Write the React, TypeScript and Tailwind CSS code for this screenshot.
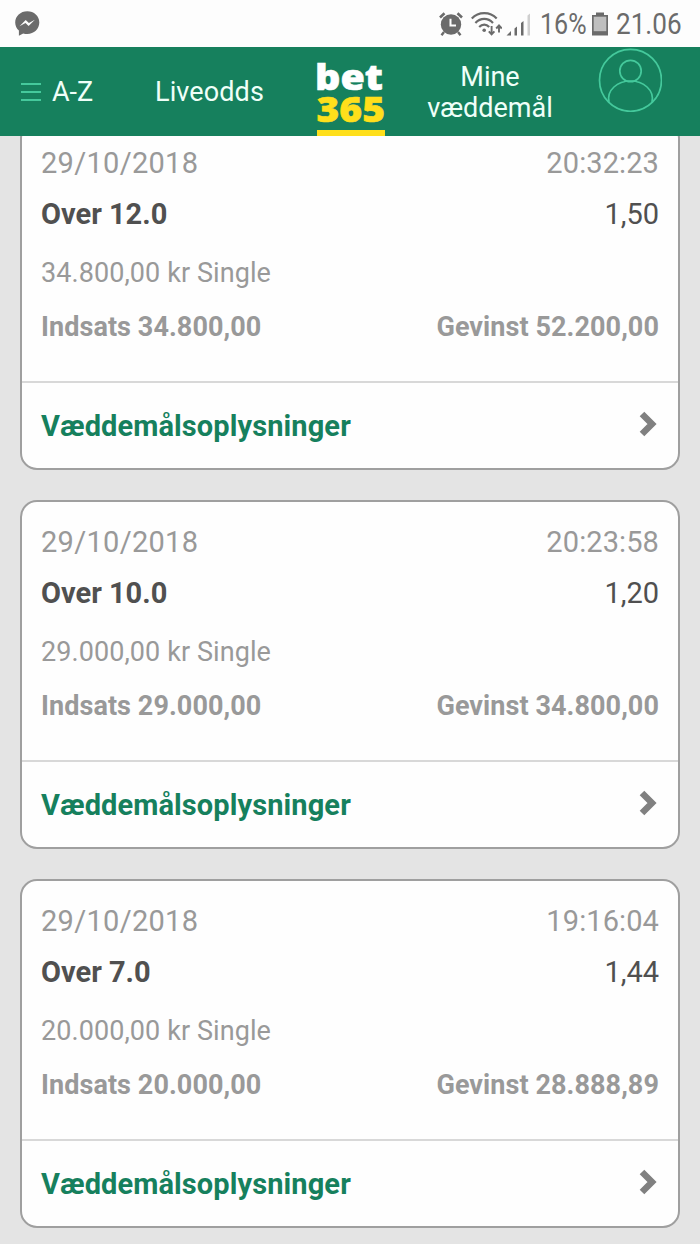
interface Bet {
    date: string;
    time: string;
    pick: string;
    odds: string;
    stake: string;
    payout: string;
}

const bets: Bet[] = [
    {
        date: "29/10/2018",
        time: "20:32:23",
        pick: "Over 12.0",
        odds: "1,50",
        stake: "34.800,00",
        payout: "52.200,00",
    },
    {
        date: "29/10/2018",
        time: "20:23:58",
        pick: "Over 10.0",
        odds: "1,20",
        stake: "29.000,00",
        payout: "34.800,00",
    },
    {
        date: "29/10/2018",
        time: "19:16:04",
        pick: "Over 7.0",
        odds: "1,44",
        stake: "20.000,00",
        payout: "28.888,89",
    },
];

const StatusBar = () => {
    return (
        <div className="flex h-[47px] shrink-0 items-center justify-between bg-[#fdfdfd] pl-[15px] pr-[18px] text-[#6b6b6b]">
            <svg width="25" height="26" viewBox="0 0 25 26">
                <path
                    d="M12.3 .3C5.5 .3 .2 5.2 .2 11.5c0 3.300 1.400 6 3.700 8.100V24.800l4.300-2.400c1.300.4 2.700.6 4.100.6 6.700 0 12-5 12-11.500S19 .3 12.300.3z"
                    fill="currentColor"
                />
                <path
                    d="M4.500 15.300l6.200-6.400 3.200 3 6-3.200-6.300 6.300-3.100-3.100z"
                    fill="#fdfdfd"
                />
            </svg>
            <div className="flex items-center">
                <svg
                    className="mr-[8px]"
                    width="24"
                    height="24"
                    viewBox="0 0 24 24"
                    fill="none"
                    stroke="currentColor"
                >
                    <circle cx="12" cy="12.500" r="10.200" fill="currentColor" stroke="none" />
                    <path d="M1 5.500L5.500 1.300M23 5.500L18.500 1.300" strokeWidth="2.600" />
                    <path d="M5 20L2.500 23.200M19 20l2.500 3.200" strokeWidth="2.400" />
                    <path d="M11.500 6.800v6.700h5.500" stroke="#fdfdfd" strokeWidth="2" />
                </svg>
                <svg
                    className="mr-1"
                    width="31"
                    height="24"
                    viewBox="0 0 31 24"
                    fill="none"
                    stroke="currentColor"
                    strokeWidth="2.200"
                >
                    <path d="M.8 6.500C7.500-.7 19-.7 25.700 6.500M4.400 11C9.500 5.600 17 5.600 22 11M8.200 15c3-3.200 7-3.200 10 0" />
                    <circle cx="13.200" cy="18.200" r="1.800" fill="currentColor" stroke="none" />
                    <path d="M20.600 14v8M17.800 19.300l2.800 3 2.800-3M28 20.500v-6.800M25.200 16.500l2.800-3 2.800 3" strokeWidth="1.900" />
                </svg>
                <svg
                    className="mr-[9px]"
                    width="25"
                    height="24"
                    viewBox="0 0 25 24"
                    fill="currentColor"
                >
                    <path d="M.5 23.500L5 19v4.500zM8.500 16.500l2.500-2v9H8.500zM15 11l2.500-2v14.500H15z" />
                    <path d="M21.500 3.500l2.500-2v22h-2.500z" fill="#cfcfcf" />
                </svg>
                <div className="w-[46px] whitespace-nowrap">
                    <div className="w-fit origin-left scale-x-[0.865] pt-px text-[29px] leading-[47px]">
                        16%
                    </div>
                </div>
                <svg
                    className="ml-[6px] mr-2"
                    width="16"
                    height="24"
                    viewBox="0 0 16 24"
                    fill="currentColor"
                >
                    <path d="M4 .5h8v3H4z" />
                    <path d="M0 3h16v20.500H0z" />
                    <path d="M1.700 4.700h12.600v14.500H1.700z" fill="#bfbfbf" />
                </svg>
                <div className="w-[66px] whitespace-nowrap">
                    <div className="w-fit origin-left scale-x-[0.9] pt-px text-[29px] leading-[47px]">
                        21.06
                    </div>
                </div>
            </div>
        </div>
    );
};

const Logo = () => {
    return (
        <div className="flex h-full w-[68px] flex-col justify-between">
            <svg className="overflow-visible" width="68" height="80" viewBox="0 0 68 80">
                <g
                    fontFamily="'Noto Sans', sans-serif"
                    fontWeight="900"
                    fontSize="35.500"
                    strokeWidth=".6"
                >
                    <text x="-2" y="43" textLength="68" lengthAdjust="spacingAndGlyphs" fill="#fff" stroke="#fff">
                        bet
                    </text>
                    <text x="-.5" y="74.500" textLength="68.500" lengthAdjust="spacingAndGlyphs" fill="#ffdf1b" stroke="#ffdf1b">
                        365
                    </text>
                </g>
            </svg>
            <div className="h-[6px] bg-[#ffdf1b]" />
        </div>
    );
};

const NavBar = () => {
    return (
        <nav className="z-10 flex h-[89px] shrink-0 items-center bg-[#16805d] text-[27px] leading-[31px] text-[#effff8]">
            <div className="flex w-[155px] items-center pl-[21px]">
                <div className="mr-3 flex w-5 flex-col gap-[6px]">
                    <div className="h-[2px] bg-[#45c99c]" />
                    <div className="h-[2px] bg-[#45c99c]" />
                    <div className="h-[2px] bg-[#45c99c]" />
                </div>
                <span className="-ml-px pt-0.5">A-Z</span>
            </div>
            <div className="w-[162px] pt-0.5 tracking-[0.1px]">Liveodds</div>
            <Logo />
            <div className="ml-[40px] w-[130px] pt-0.5 text-center">
                Mine
                <br />
                væddemål
            </div>
            <svg
                className="mb-[23px] ml-[43px]"
                width="64"
                height="64"
                viewBox="0 0 64 64"
                fill="none"
                stroke="#45c99c"
                strokeWidth="1.700"
            >
                <circle cx="32.500" cy="32.300" r="31" />
                <circle cx="32.500" cy="23" r="10.700" />
                <path d="M11 54C8.500 42 19.500 33 32.500 33s24 9 21.500 21" />
            </svg>
        </nav>
    );
};

const BetCard = ({ date, time, pick, odds, stake, payout }: Bet) => {
    return (
        <div className="h-[349px] shrink-0 rounded-[17px] border-2 border-[#9f9f9f] bg-[#fefefe]">
            <div className="h-[258px] px-[19px] pt-4 text-[#999]">
                <div className="flex h-[50px] items-center justify-between text-[29px]">
                    <span className="tracking-[0.3px]">{date}</span>
                    <span className="tracking-[0.1px]">{time}</span>
                </div>
                <div className="flex h-[51px] items-center justify-between text-[29px] text-[#505050]">
                    <span className="font-bold">{pick}</span>
                    <span>{odds}</span>
                </div>
                <div className="mt-1 flex h-[58px] items-center text-[27px] tracking-[0.08px]">
                    {stake} kr Single
                </div>
                <div className="flex h-[51px] items-center justify-between text-[27px] font-bold tracking-[0.07px]">
                    <span>Indsats {stake}</span>
                    <span>Gevinst {payout}</span>
                </div>
            </div>
            <div className="flex h-[87px] items-center justify-between border-t-2 border-[#d8d8d8] pl-[19px] pr-[20px] text-[29px] font-bold text-[#16805d]">
                <span className="pt-0.5 tracking-[0.1px]">Væddemålsoplysninger</span>
                <svg className="mb-[3px]" width="19" height="26" viewBox="0 0 19 26" fill="none">
                    <path d="M3 3L13 13 3 23" stroke="#808080" strokeWidth="6.500" />
                </svg>
            </div>
        </div>
    );
};

export default function App() {
    return (
        <div className="flex h-[1244px] w-[700px] flex-col overflow-hidden bg-[#e4e4e4] font-[Roboto,sans-serif]">
            <StatusBar />
            <NavBar />
            <main className="-mt-[15px] flex flex-col gap-[30px] px-5">
                {bets.map((bet) => (
                    <BetCard key={bet.time} {...bet} />
                ))}
            </main>
        </div>
    );
}
